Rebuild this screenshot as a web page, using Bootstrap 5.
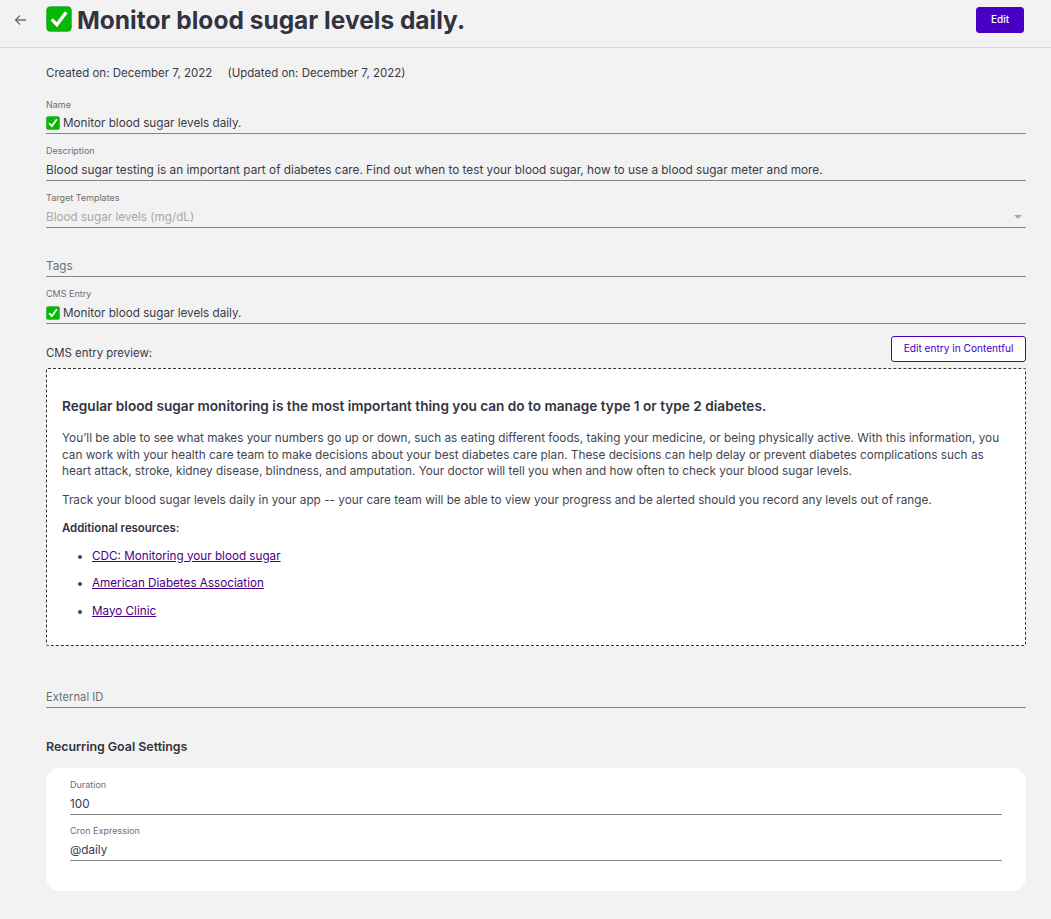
<!doctype html>
<html lang="en"><head><meta charset="utf-8"><title>Goal</title>
<link href="https://cdn.jsdelivr.net/npm/bootstrap@5.3.0/dist/css/bootstrap.min.css" rel="stylesheet">
<style>
html,body{background:#f2f2f2;}
body{font-family:Inter,"Liberation Sans",sans-serif;color:#3a3a48;font-size:12px;height:919px;overflow:hidden;}
.topbar{height:48px;border-bottom:1px solid #d9d9d9;padding:0 27px 8px 14px;}
.back-ic{width:13px;height:12px;margin-right:19px;}
.goal-title{font-size:24.5px;font-weight:700;margin:0;color:#33333f;line-height:38px;}
.title-ic{width:26px;height:26px;margin-right:5px;margin-top:-2px;}
.edit-main{width:48px;height:26px;padding:0;font-size:10px;font-weight:500;background:#4700c4;border-color:#4700c4;border-radius:3px;color:#fff;}
.sheet{padding:0 25px 0 46px;}
.stamp{font-size:11.5px;height:51px;padding-top:17px;line-height:16px;}
.stamp span{margin-left:12px;}
.fld{height:47px;border-bottom:1px solid #858585;display:flex;flex-direction:column;justify-content:flex-end;}
.fld-first{height:35px;}
.fld-lbl{font-size:9px;line-height:11px;color:#6e6e76;height:13px;margin-bottom:2px;}
.fld-val{font-size:11.7px;line-height:20px;color:#3a3a48;}
.fld-wide{font-size:11.8px;}
.fld-val svg{width:14px;height:14px;margin-right:3px;vertical-align:-3px;}
.muted-val{color:#a8a8a8;}
.empty-fld{height:30px;margin-top:19px;}
.empty-fld .fld-val{color:#6e6e76;}
.ext-val{font-size:11.2px;}
.caret-ic{width:0;height:0;border-left:4px solid transparent;border-right:4px solid transparent;border-top:4px solid #a8a8a8;margin-right:4px;}
.prev-head{height:38px;align-items:flex-end;}
.prev-lbl{font-size:11.4px;line-height:16px;margin-bottom:1px;}
.cms-btn{width:135px;height:26px;padding:0;font-size:10.15px;background:#fff;color:#4700c4;border:1px solid #4700c4;border-radius:3px;}
.prev-box{height:278px;margin-top:6px;background:#fff;border:1px dashed #33333f;border-radius:2px;padding:0 15px;font-size:11.78px;line-height:16.5px;color:#44444f;}
.prev-box h3{font-size:13.63px;font-weight:600;line-height:20px;margin:27px 0 14px;color:#33333f;}
.prev-box p{margin:0 0 12px;}
.prev-box .res-h{font-weight:600;font-size:11.4px;color:#33333f;margin-bottom:11px;}
.prev-box ul{margin:0;padding-left:30px;}
.prev-box li{margin-bottom:11px;font-size:11.7px;}
.prev-box a{color:#4b0082;}
.ext-gap{margin-top:32px;}
.sec-title{font-size:12.4px;font-weight:600;line-height:18px;margin:30px 0 12px;color:#33333f;}
.rec-card{height:123px;background:#fff;border-radius:14px;padding:0 24px;}
.rec-card .fld-top{height:47px;}
.rec-card .fld-next{height:46px;}
</style></head>
<body>
<svg width="0" height="0" class="position-absolute"><defs>
<symbol id="chk" viewBox="0 0 36 36"><rect x="1" y="1" width="34" height="34" rx="5" fill="#07b807"/><rect x="1" y="1" width="34" height="34" rx="5" fill="none" stroke="#0a9a0a" stroke-width="1"/><path d="M8 18.5l7 7.5L28 8.5" fill="none" stroke="#fff" stroke-width="4.6" stroke-linejoin="miter"/></symbol>
</defs></svg>
<header class="topbar d-flex align-items-center">
  <svg class="back-ic" viewBox="0 0 13 12"><path d="M12 6H1.5M6 1.5L1.5 6 6 10.5" fill="none" stroke="#6e6e76" stroke-width="1.3"/></svg>
  <svg class="title-ic"><use href="#chk"/></svg>
  <h1 class="goal-title flex-grow-1">Monitor blood sugar levels daily.</h1>
  <button class="btn btn-primary edit-main" type="button">Edit</button>
</header>
<main class="sheet">
  <div class="stamp">Created on: December 7, 2022 <span>(Updated on: December 7, 2022)</span></div>
  <div class="fld fld-first"><div class="fld-lbl">Name</div><div class="fld-val"><svg><use href="#chk"/></svg>Monitor blood sugar levels daily.</div></div>
  <div class="fld"><div class="fld-lbl">Description</div><div class="fld-val fld-wide">Blood sugar testing is an important part of diabetes care. Find out when to test your blood sugar, how to use a blood sugar meter and more.</div></div>
  <div class="fld"><div class="fld-lbl">Target Templates</div><div class="fld-val muted-val d-flex justify-content-between align-items-center">Blood sugar levels (mg/dL)<i class="caret-ic"></i></div></div>
  <div class="fld empty-fld"><div class="fld-val">Tags</div></div>
  <div class="fld"><div class="fld-lbl">CMS Entry</div><div class="fld-val"><svg><use href="#chk"/></svg>Monitor blood sugar levels daily.</div></div>
  <div class="prev-head d-flex justify-content-between">
    <div class="prev-lbl">CMS entry preview:</div>
    <button class="btn cms-btn" type="button">Edit entry in Contentful</button>
  </div>
  <section class="prev-box">
    <h3>Regular blood sugar monitoring is the most important thing you can do to manage type 1 or type 2 diabetes.</h3>
    <p>You’ll be able to see what makes your numbers go up or down, such as eating different foods, taking your medicine, or being physically active. With this information, you can work with your health care team to make decisions about your best diabetes care plan. These decisions can help delay or prevent diabetes complications such as heart attack, stroke, kidney disease, blindness, and amputation. Your doctor will tell you when and how often to check your blood sugar levels.</p>
    <p>Track your blood sugar levels daily in your app -- your care team will be able to view your progress and be alerted should you record any levels out of range.</p>
    <p class="res-h">Additional resources:</p>
    <ul>
      <li><a href="#">CDC: Monitoring your blood sugar</a></li>
      <li><a href="#">American Diabetes Association</a></li>
      <li><a href="#">Mayo Clinic</a></li>
    </ul>
  </section>
  <div class="fld empty-fld ext-gap"><div class="fld-val ext-val">External ID</div></div>
  <h2 class="sec-title">Recurring Goal Settings</h2>
  <section class="rec-card">
    <div class="fld fld-top"><div class="fld-lbl">Duration</div><div class="fld-val">100</div></div>
    <div class="fld fld-next"><div class="fld-lbl">Cron Expression</div><div class="fld-val">@daily</div></div>
  </section>
</main>
</body></html>
